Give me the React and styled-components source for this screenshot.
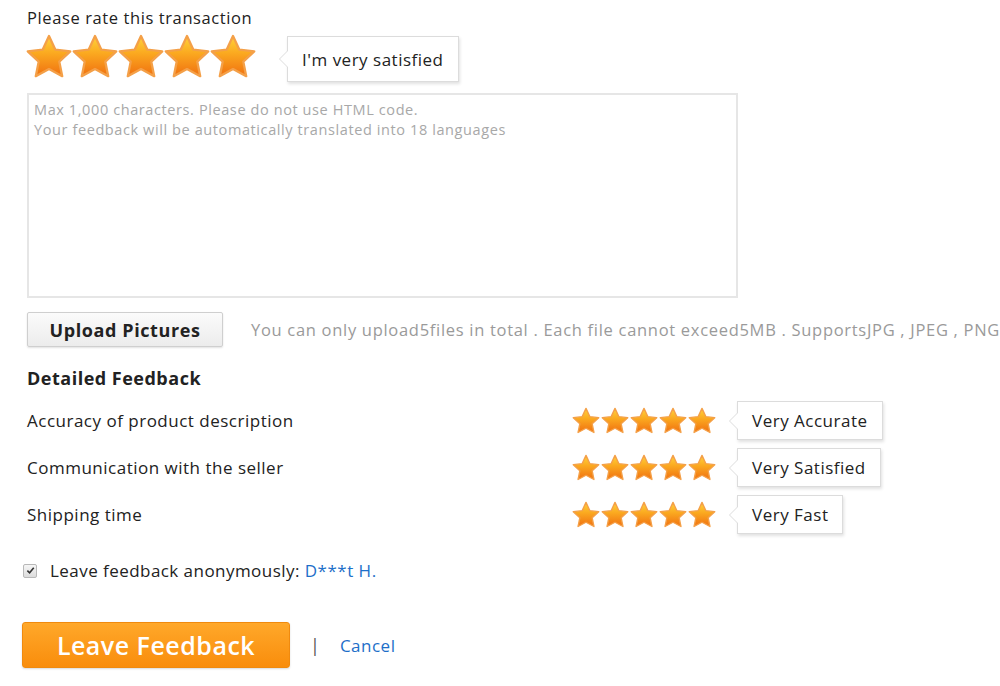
import React from "react";
import styled, { createGlobalStyle } from "styled-components";

const Global = createGlobalStyle`
  html, body { margin: 0; padding: 0; background: #fff; }
  body { font-family: "Open Sans", "Noto Sans", sans-serif; color: #222; }
`;

const Page = styled.div`
  width: 1000px;
  height: 686px;
  overflow: hidden;
  padding: 7px 0 0 27px;
  box-sizing: border-box;
`;

const Title = styled.div`
  font-size: 16.5px;
  line-height: 22px;
  letter-spacing: 0.6px;
  color: #222;
`;

const RateRow = styled.div`
  display: flex;
  align-items: center;
  margin-top: 5px;
  height: 46px;
`;

const Stars = styled.div`
  display: flex;
  margin-left: ${(p) => p.$offset || 0}px;
  & > svg + svg {
    margin-left: ${(p) => p.$gap}px;
  }
`;

const Bubble = styled.div`
  position: relative;
  margin-left: ${(p) => p.$ml}px;
  margin-top: ${(p) => p.$mt || 0}px;
  height: ${(p) => p.$h}px;
  padding: 0 ${(p) => p.$px}px;
  display: flex;
  align-items: center;
  background: #fff;
  border: 1px solid #dcdcdc;
  box-shadow: 1px 2px 3px rgba(0, 0, 0, 0.12);
  font-size: ${(p) => p.$fs}px;
  letter-spacing: 0.5px;
  color: #222;
  white-space: nowrap;
  &::before {
    content: "";
    position: absolute;
    left: -9px;
    top: 50%;
    margin-top: -9px;
    border-style: solid;
    border-width: 9px 9px 9px 0;
    border-color: transparent #dcdcdc transparent transparent;
  }
  &::after {
    content: "";
    position: absolute;
    left: -8px;
    top: 50%;
    margin-top: -8px;
    border-style: solid;
    border-width: 8px 8px 8px 0;
    border-color: transparent #fff transparent transparent;
  }
`;

const TextArea = styled.div`
  margin-top: 13px;
  width: 711px;
  height: 205px;
  box-sizing: border-box;
  border: 2px solid #e6e6e6;
  padding: 5px 5px;
  font-size: 14.5px;
  line-height: 20px;
  color: #a8a8a8;
  letter-spacing: 0.6px;
`;

const UploadRow = styled.div`
  display: flex;
  align-items: center;
  margin-top: 14px;
`;

const UploadButton = styled.button`
  width: 197px;
  height: 35px;
  border: 1px solid #cfcfcf;
  border-radius: 2px;
  background: linear-gradient(#fbfbfb, #ececec);
  box-shadow: 0 1px 2px rgba(0, 0, 0, 0.12);
  font-family: inherit;
  font-weight: 700;
  font-size: 18px;
  letter-spacing: 0.6px;
  color: #222;
  padding: 0;
`;

const Hint = styled.span`
  margin-left: 28px;
  font-size: 16.5px;
  color: #9a9a9a;
  white-space: nowrap;
  letter-spacing: 0.7px;
`;

const SectionTitle = styled.div`
  margin-top: 19px;
  font-weight: 700;
  font-size: 18px;
  line-height: 24px;
  letter-spacing: 0.5px;
`;

const DetailList = styled.div`
  display: flex;
  flex-direction: column;
  gap: 10px;
  margin-top: 12px;
`;

const DetailRow = styled.div`
  display: flex;
  align-items: center;
  height: 37px;
`;

const Label = styled.div`
  width: 544px;
  font-size: 17px;
  letter-spacing: 0.5px;
  color: #222;
`;

const CheckRow = styled.div`
  display: flex;
  align-items: center;
  margin-top: 26px;
  margin-left: -4px;
  font-size: 17px;
  letter-spacing: 0.45px;
`;

const Check = styled.span`
  width: 12px;
  height: 12px;
  border: 1px solid #b8b8b8;
  border-radius: 2px;
  background: linear-gradient(#f6f6f6, #dcdcdc);
  display: inline-flex;
  align-items: center;
  justify-content: center;
  margin-right: 13px;
`;

const Link = styled.a`
  color: #1e6fc9;
  text-decoration: none;
  margin-left: ${(p) => p.$ml || 0}px;
  font-size: ${(p) => p.$fs || 17}px;
  letter-spacing: 0.5px;
`;

const ActionRow = styled.div`
  display: flex;
  align-items: center;
  margin-top: 40px;
  margin-left: -5px;
`;

const PrimaryButton = styled.button`
  width: 268px;
  height: 46px;
  border: 1px solid #f08a0e;
  border-radius: 3px;
  background: linear-gradient(#ffa82a, #f98d0c);
  box-shadow: 0 1px 2px rgba(0, 0, 0, 0.15);
  color: #fff;
  font-family: inherit;
  font-size: 25px;
  font-weight: 600;
  letter-spacing: 0.5px;
  padding: 0;
`;

const Sep = styled.span`
  margin-left: 20px;
  font-size: 18px;
  color: #555;
`;

let sid = 0;
function Star({ size }) {
  const id = React.useMemo(() => `sg${sid++}`, []);
  return (
    <svg width={size} height={size} viewBox="0 0 24 24">
      <defs>
        <linearGradient id={id} x1="0" y1="0" x2="0" y2="1">
          <stop offset="0" stopColor="#ffd43c" />
          <stop offset="0.42" stopColor="#fbaa20" />
          <stop offset="1" stopColor="#f07010" />
        </linearGradient>
      </defs>
      <path
        d="M12 1.9 L15.06 8.5 L22.2 9.3 L16.95 14.25 L18.35 21.2 L12 17.8 L5.65 21.2 L7.05 14.25 L1.8 9.3 L8.94 8.5 Z"
        fill={`url(#${id})`}
        stroke="#f4a048"
        strokeWidth="1.1"
        strokeLinejoin="round"
      />
    </svg>
  );
}

function StarRow({ size, gap, offset }) {
  return (
    <Stars $gap={gap} $offset={offset}>
      {[0, 1, 2, 3, 4].map((i) => (
        <Star key={i} size={size} />
      ))}
    </Stars>
  );
}

const details = [
  ["Accuracy of product description", "Very Accurate"],
  ["Communication with the seller", "Very Satisfied"],
  ["Shipping time", "Very Fast"],
];

export default function App() {
  return (
    <Page>
      <Global />
      <Title>Please rate this transaction</Title>
      <RateRow>
        <StarRow size={50} gap={-4} offset={-3} />
        <Bubble $ml={29} $h={44} $px={14} $fs={17} $mt={4}>
          I'm very satisfied
        </Bubble>
      </RateRow>
      <TextArea>
        Max 1,000 characters. Please do not use HTML code.
        <br />
        Your feedback will be automatically translated into 18 languages
      </TextArea>
      <UploadRow>
        <UploadButton>Upload Pictures</UploadButton>
        <Hint>
          You can only upload5files in total . Each file cannot exceed5MB . SupportsJPG , JPEG , PNG
        </Hint>
      </UploadRow>
      <SectionTitle>Detailed Feedback</SectionTitle>
      <DetailList>
        {details.map(([l, v]) => (
          <DetailRow key={l}>
            <Label>{l}</Label>
            <StarRow size={30} gap={-1} />
            <Bubble $ml={20} $h={37} $px={14} $fs={17}>
              {v}
            </Bubble>
          </DetailRow>
        ))}
      </DetailList>
      <CheckRow>
        <Check>
          <svg width="9" height="9" viewBox="0 0 10 10">
            <path d="M1.5 5.2 L4 7.6 L8.6 2" fill="none" stroke="#333" strokeWidth="1.8" />
          </svg>
        </Check>
        Leave feedback anonymously:&nbsp;
        <Link href="#">D***t H.</Link>
      </CheckRow>
      <ActionRow>
        <PrimaryButton>Leave Feedback</PrimaryButton>
        <Sep>|</Sep>
        <Link href="#" $ml={20}>
          Cancel
        </Link>
      </ActionRow>
    </Page>
  );
}
